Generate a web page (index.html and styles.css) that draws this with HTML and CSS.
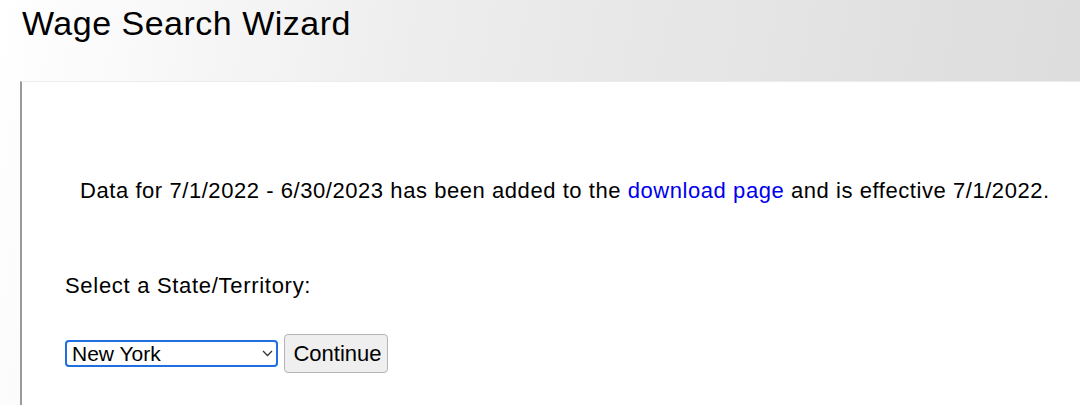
FILE: index.html
```html
<!DOCTYPE html>
<html lang="en">
<head>
<meta charset="utf-8">
<title>Wage Search Wizard</title>
<link rel="stylesheet" href="styles.css">
</head>
<body>
<header class="header">
  <h1 class="title">Wage Search Wizard</h1>
</header>
<main class="panel">
  <p class="notice">Data for 7/1/2022 - 6/30/2023 has been added to the <a class="link" href="#">download page</a> and is effective 7/1/2022.</p>
  <p class="label">Select a State/Territory:</p>
  <form class="row">
    <span class="select-wrap">
      <select class="select">
        <option>New York</option>
      </select>
      <svg class="chevron" width="11" height="7" viewBox="0 0 11 7"><path d="M1 1 L5.5 5.5 L10 1" fill="none" stroke="#333" stroke-width="1.3"/></svg>
    </span>
    <button class="button" type="button">Continue</button>
  </form>
</main>
</body>
</html>
```
FILE: styles.css
```css
html, body {
  margin: 0;
  height: 100%;
}
body {
  font-family: "Liberation Sans", Arial, sans-serif;
  color: #000;
  background: linear-gradient(100deg, #ffffff 0%, #ececec 40%, #dbdbdb 100%);
  overflow: hidden;
}
.header {
  height: 81px;
  padding-left: 22px;
  box-sizing: border-box;
}
.title {
  margin: 0;
  padding-top: 4px;
  font-size: 34px;
  letter-spacing: 0.5px;
  font-weight: normal;
  line-height: 39px;
}
.panel {
  margin-left: 20px;
  border-left: 2px solid #9a9a9a;
  border-top: 1px solid #ececec;
  background: #fff;
  box-sizing: border-box;
  height: calc(100% - 81px);
  padding: 96px 0 0 43px;
}
.notice {
  margin: 0;
  padding-left: 15px;
  font-size: 22px;
  letter-spacing: 0.56px;
  line-height: 25px;
}
.link {
  color: #0000ee;
  text-decoration: none;
}
.label {
  margin: 70px 0 0;
  font-size: 22px;
  letter-spacing: 0.7px;
  line-height: 25px;
}
.row {
  margin-top: 36px;
  display: flex;
  align-items: center;
  gap: 6px;
}
.select-wrap {
  position: relative;
  display: inline-flex;
}
.select {
  appearance: none;
  -webkit-appearance: none;
  width: 213px;
  height: 27px;
  box-sizing: border-box;
  border: 2px solid #1f6fe0;
  border-radius: 4px;
  background: #fff;
  font-family: "Liberation Sans", Arial, sans-serif;
  font-size: 21px;
  line-height: 23px;
  padding: 0 20px 0 5px;
  color: #000;
  margin: 0;
}
.chevron {
  position: absolute;
  right: 5px;
  top: 10px;
  pointer-events: none;
}
.button {
  height: 39px;
  width: 104px;
  box-sizing: border-box;
  border: 1px solid #b4b4b4;
  border-radius: 4px;
  background: #efefef;
  font-family: "Liberation Sans", Arial, sans-serif;
  font-size: 22px;
  color: #000;
  padding: 0 0 0 3px;
  margin: 0;
}
```
